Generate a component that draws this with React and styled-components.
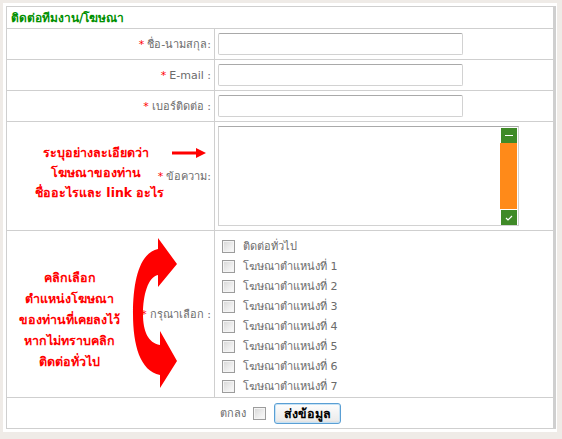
import React from 'react';
import styled, { createGlobalStyle } from 'styled-components';

const GlobalStyle = createGlobalStyle`
  html, body {
    margin: 0;
    padding: 0;
    background: #efebe7;
  }
  body {
    font-family: Tahoma, "DejaVu Sans", sans-serif;
    font-size: 11px;
    color: #666;
  }
`;

const Page = styled.div`
  width: 554px;
  height: 429px;
  margin: 3px 0 0 3px;
  padding: 3px;
  box-sizing: border-box;
  background: #fff;
`;

const Form = styled.div`
  display: grid;
  grid-template-columns: 207px 338px;
  grid-template-rows: 21px 30px 30px 30px 108px 166px 30px;
  gap: 1px;
  padding: 1px;
  width: 548px;
  background: #cfcfcf;
`;

const Cell = styled.div`
  background: #fff;
  display: flex;
  align-items: center;
  min-width: 0;
  grid-column: ${(p) => (p.$span ? '1 / -1' : 'auto')};
  justify-content: ${(p) => p.$justify || 'flex-start'};
`;

const Title = styled.div`
  grid-column: 1 / -1;
  background: #fff;
  padding: 0 0 0 4px;
  display: flex;
  align-items: center;
  color: #009000;
  font-weight: bold;
  font-size: 12px;
`;

const Label = styled.span`
  padding-right: 3px;
  white-space: nowrap;
  color: #6b6b6b;
  & > b {
    color: #ff0000;
    font-weight: normal;
    margin-right: 3px;
  }
`;

const LabelCell = styled.div`
  background: #fff;
  display: grid;
  min-width: 0;
  & > * {
    grid-area: 1 / 1;
  }
  & > ${Label} {
    justify-self: end;
    align-self: center;
  }
`;

const Input = styled.div`
  width: 245px;
  height: 22px;
  margin-left: 3px;
  box-sizing: border-box;
  border: 1px solid #d2d2d2;
  border-top-color: #a9a9a9;
  border-radius: 2px;
  background: #fff;
`;

const TextArea = styled.div`
  width: 301px;
  height: 100px;
  margin-left: 3px;
  box-sizing: border-box;
  border: 1px solid #d2d2d2;
  border-top-color: #a9a9a9;
  display: flex;
  justify-content: flex-end;
  padding: 0 1px 0 0;
`;

const ScrollBar = styled.div`
  width: 17px;
  background: #ff8a19;
  display: flex;
  flex-direction: column;
  justify-content: space-between;
`;

const ScrollBtn = styled.div`
  height: 16px;
  background: #3f8a27;
  border-top: 1px solid #fff;
  border-left: 1px solid #fff;
  box-sizing: border-box;
  display: flex;
  align-items: center;
  justify-content: center;
`;

const Note = styled.div`
  display: flex;
  align-items: ${(p) => p.$align || 'flex-start'};
  align-self: ${(p) => p.$self || 'center'};
  justify-self: start;
  margin-left: ${(p) => p.$left}px;
  margin-top: ${(p) => p.$top || 0}px;
`;

const NoteText = styled.div`
  color: #ff0000;
  font-weight: bold;
  font-size: 12.5px;
  text-align: center;
  line-height: ${(p) => p.$lh}px;
  width: ${(p) => p.$w}px;
  margin-top: ${(p) => p.$top || 0}px;
  white-space: nowrap;
`;

const ArrowWrap = styled.div`
  margin: 4px 0 0 ${(p) => p.$left}px;
  display: flex;
`;

const CheckList = styled.div`
  display: flex;
  flex-direction: column;
  margin: 4px 0 0 7px;
`;

const CheckRow = styled.label`
  display: flex;
  align-items: center;
  height: 20px;
  gap: 8px;
  color: #6b6b6b;
`;

const Box = styled.span`
  display: inline-block;
  width: 13px;
  height: 13px;
  box-sizing: border-box;
  border: 1px solid #9c9c9c;
  background: linear-gradient(135deg, #d6d6d6 0%, #eeeeee 60%, #fbfbfb 100%);
  box-shadow: inset 0 0 0 1px #f4f4f4;
`;

const Submit = styled.div`
  display: flex;
  align-items: center;
  gap: 7px;
  color: #6b6b6b;
`;

const Button = styled.button`
  width: 67px;
  height: 21px;
  padding: 0;
  margin-left: 1px;
  border: 1px solid #5a9fd4;
  border-radius: 3px;
  background: linear-gradient(#fdfdfd, #ececec 85%, #d8d8d8);
  box-shadow: inset 0 0 0 1px #c6e2f5;
  font-family: inherit;
  font-size: 12.5px;
  font-weight: bold;
  color: #000;
`;

const options = [
  'ติดต่อทั่วไป',
  'โฆษณาตำแหน่งที่ 1',
  'โฆษณาตำแหน่งที่ 2',
  'โฆษณาตำแหน่งที่ 3',
  'โฆษณาตำแหน่งที่ 4',
  'โฆษณาตำแหน่งที่ 5',
  'โฆษณาตำแหน่งที่ 6',
  'โฆษณาตำแหน่งที่ 7',
];

const fields = ['ชื่อ-นามสกุล:', 'E-mail :', 'เบอร์ติดต่อ :'];

const Arrow = () => (
  <svg width="34" height="12" viewBox="0 0 34 12">
    <rect x="0" y="4.5" width="26" height="3" fill="#ff0000" />
    <polygon points="24,1 34,6 24,11" fill="#ff0000" />
  </svg>
);

const CurvedArrow = () => (
  <svg width="46" height="158" viewBox="0 0 46 158">
    <path
      d="M26 14 L26 3 L45 29 L26 52 L26 40 C16 42 11 60 11 79 C11 96 16 108 28 110 L28 96 L45 126 L28 153 L28 140 C8 136 1 110 1 79 C1 44 8 18 26 14 Z"
      fill="#ff0000"
    />
  </svg>
);

export default function App() {
  return (
    <>
      <GlobalStyle />
      <Page>
        <Form>
          <Title>ติดต่อทีมงาน/โฆษณา</Title>
          {fields.map((f) => (
            <React.Fragment key={f}>
              <Cell $justify="flex-end">
                <Label>
                  <b>*</b>
                  {f}
                </Label>
              </Cell>
              <Cell>
                <Input />
              </Cell>
            </React.Fragment>
          ))}

          <LabelCell>
            <Note $left={28} $self="start" $top={21}>
              <NoteText $lh={20} $w={122}>
                ระบุอย่างละเอียดว่า
                <br />
                โฆษณาของท่าน
                <br />
                ชื่ออะไรและ link อะไร
              </NoteText>
              <ArrowWrap $left={15}>
                <Arrow />
              </ArrowWrap>
            </Note>
            <Label>
              <b>*</b>ข้อความ:
            </Label>
          </LabelCell>
          <Cell>
            <TextArea>
              <ScrollBar>
                <ScrollBtn>
                  <svg width="8" height="2">
                    <rect width="8" height="1" fill="#fff" />
                  </svg>
                </ScrollBtn>
                <ScrollBtn>
                  <svg width="8" height="6" viewBox="0 0 8 6">
                    <path d="M1 3 L3 5 L7 1" stroke="#fff" strokeWidth="1.2" fill="none" />
                  </svg>
                </ScrollBtn>
              </ScrollBar>
            </TextArea>
          </Cell>

          <LabelCell>
            <Note $left={0} $align="center">
              <NoteText $lh={21} $w={125} $top={10}>
                คลิกเลือก
                <br />
                ตำแหน่งโฆษณา
                <br />
                ของท่านที่เคยลงไว้
                <br />
                หากไม่ทราบคลิก
                <br />
                ติดต่อทั่วไป
              </NoteText>
              <CurvedArrow />
            </Note>
            <Label>
              <b>*</b>กรุณาเลือก :
            </Label>
          </LabelCell>
          <Cell>
            <CheckList>
              {options.map((o) => (
                <CheckRow key={o}>
                  <Box />
                  {o}
                </CheckRow>
              ))}
            </CheckList>
          </Cell>

          <Cell $span $justify="center">
            <Submit>
              ตกลง
              <Box />
              <Button>ส่งข้อมูล</Button>
            </Submit>
          </Cell>
        </Form>
      </Page>
    </>
  );
}
